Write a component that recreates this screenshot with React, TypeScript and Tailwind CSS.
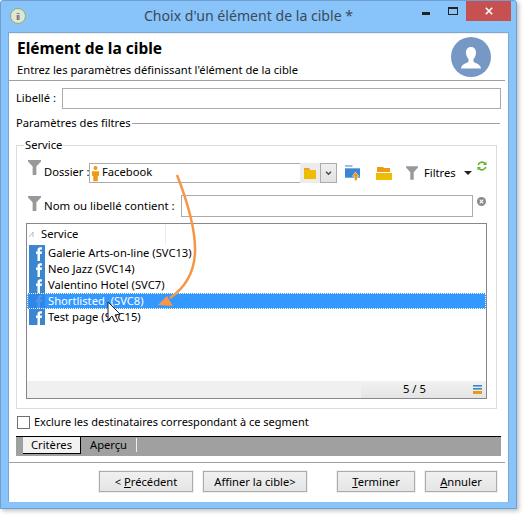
import React from "react";

const Funnel = ({ className = "" }: { className?: string }) => (
  <svg viewBox="0 0 14 16" className={className}>
    <path d="M0 0H14V1.5L9 7V16H5V7L0 1.5Z" fill="#999999" />
  </svg>
);

const Fb = ({ dim = false }: { dim?: boolean }) => (
  <svg viewBox="0 0 16 16" className="w-4 h-4 shrink-0">
    <rect width="16" height="16" fill={dim ? "#2f86e6" : "#3b86d0"} />
    <path d="M8.5 16V9H7V6.6H8.5V5C8.5 3.2 9.6 2.2 11.2 2.2H13V4.6H12C11.2 4.6 11 5 11 5.6V6.6H13L12.7 9H11V16Z" fill={dim ? "#4b98ea" : "#ffffff"} />
  </svg>
);

const rows = [
  ["Galerie Arts-on-line (SVC13)", false],
  ["Neo Jazz (SVC14)", false],
  ["Valentino Hotel (SVC7)", false],
  ["Shortlisted  (SVC8)", true],
  ["Test page (SVC15)", false],
] as const;

const Btn = ({ children, w }: { children: React.ReactNode; w: string }) => (
  <button className={`${w} h-[21px] border border-[#acacac] outline outline-1 outline-[#efefef] bg-gradient-to-b from-[#f0f0f0] to-[#e5e5e5] text-[11.2px] text-black leading-none`}>
    {children}
  </button>
);

export default function App() {
  return (
    <div className="relative w-[527px] h-[518px] bg-white overflow-hidden text-[11.2px] text-black" style={{ fontFamily: '"Noto Sans", sans-serif' }}>
      <div className="w-[517px] h-[509px] bg-[#88c4f9] border border-[#6f9fd0] rounded-t-[3px] flex flex-col shadow-[2px_2px_4px_rgba(0,0,0,0.25)]">
        {/* Title bar */}
        <div className="relative h-[31px] shrink-0 flex items-center justify-center">
          <div className="absolute left-[9px] top-[7px] w-[16px] h-[16px] rounded-full bg-[#dfe5d8] border border-[#8fb35a] flex items-center justify-center text-[9px] leading-none text-[#444]">ⅱ</div>
          <span className="text-[14.1px] text-[#3b4a57] pr-[20px] pb-[1px]">Choix d'un élément de la cible *</span>
          <div className="absolute right-[5px] top-0 flex items-start">
            <svg viewBox="0 0 8 3" className="w-[8px] h-[3px] mt-[11px]"><rect width="8" height="3" fill="#222" /></svg>
            <div className="w-[10px] h-[8px] mt-[6px] ml-[18px] border border-[#222] border-t-2" />
            <div className="w-[45px] h-[20px] ml-[8px] bg-[#c75050] flex items-center justify-center">
              <svg viewBox="0 0 10 10" className="w-[8px] h-[8px]"><path d="M1 1L9 9M9 1L1 9" stroke="#fff" strokeWidth="2" /></svg>
            </div>
          </div>
        </div>

        {/* Client */}
        <div className="ml-[7px] w-[501px] h-[470px] bg-white border-l border-r border-t border-[#7fa8d0] flex flex-col">
          <div className="h-[1px] bg-[#f0f0f0]" />
          {/* Header */}
          <div className="relative h-[47px] mr-[3px] border-b border-[#a0a0a0] pl-[8px] pt-[4px]">
            <div className="font-bold text-[15.5px] leading-[20px]">Elément de la cible</div>
            <div className="leading-[17px] mt-[3px]">Entrez les paramètres définissant l'élément de la cible</div>
            <svg viewBox="0 0 40 40" className="absolute left-[442px] top-[3px] w-[40px] h-[40px]">
              <clipPath id="c"><circle cx="20" cy="20" r="20" /></clipPath>
              <circle cx="20" cy="20" r="20" fill="#7698c4" />
              <path clipPath="url(#c)" d="M20 10C16.5 10 15 12.5 15 15.5C15 18.5 16.5 21 17.5 22V24.5C17.5 25.5 10 27 10 31.5H30C30 27 22.5 25.5 22.5 24.5V22C23.5 21 25 18.5 25 15.5C25 12.5 23.5 10 20 10Z" fill="#ffffff" />
            </svg>
          </div>

          {/* Libellé */}
          <div className="flex items-center h-[21px] mt-[7px] pl-[7px]">
            <span className="w-[46px]">Libellé :</span>
            <div className="w-[439px] h-[21px] border border-[#ababab] bg-white" />
          </div>

          {/* Paramètres */}
          <div className="flex items-center gap-[1px] mt-[6px] pl-[7px] mr-[8px] h-[17px]">
            <span>Paramètres des filtres</span>
            <div className="flex-1 h-px bg-[#a0a0a0]" />
          </div>

          {/* Group */}
          <fieldset className="mt-[5px] ml-[7px] w-[481px] h-[272px] border border-[#dcdcdc] px-[9px] pb-[9px] block">
            <legend className="ml-[-2px] px-[1px] leading-[16px]">Service</legend>

            <div className="flex items-center h-[20px] mt-[10px] relative">
              <Funnel className="w-[13px] h-[15px] mt-[-11px] ml-[2px] shrink-0" />
              <span className="ml-[3px] w-[45px] shrink-0 whitespace-nowrap pb-[1px]">Dossier :</span>
              <div className="w-[211px] h-[20px] shrink-0 border border-[#ababab] border-r-0 flex items-center relative">
                <svg viewBox="0 0 10 17" className="w-[9px] h-[17px] ml-[1px]">
                  <circle cx="5" cy="2.5" r="2.2" fill="#f09a13" />
                  <path d="M1 6H9V11H7.5V17H2.5V11H1Z" fill="#f09a13" />
                </svg>
                <span className="ml-[2px] pb-[1px]">Facebook</span>
              </div>
              <div className="w-[20px] h-[20px] shrink-0 bg-[#ececec] flex items-center justify-center">
                <svg viewBox="0 0 12 11" className="w-[12px] h-[11px]">
                  <path d="M0 0H5L6 2H12V11H0Z" fill="#eebc00" />
                  <path d="M0 0H5L6 2H0Z" fill="#f0a030" />
                </svg>
              </div>
              <div className="w-[17px] h-[20px] shrink-0 border border-[#ababab] bg-gradient-to-b from-[#efefef] to-[#e2e2e2] flex items-center justify-center">
                <svg viewBox="0 0 8 6" className="w-[7px] h-[5px]"><path d="M1 1L4 4L7 1" fill="none" stroke="#444" strokeWidth="1.6" /></svg>
              </div>
              <svg viewBox="0 0 16 16" className="w-[15px] h-[16px] ml-[8px] shrink-0">
                <path d="M0 0H8V1H0Z" fill="#2a78c8" />
                <path d="M0 3H16V13H0Z" fill="#3b86d0" />
                <path d="M11 7L15 11.5H13V16H10V11.5H8Z" fill="#f0901a" stroke="#fff" strokeWidth=".5" />
              </svg>
              <svg viewBox="0 0 16 14" className="w-[16px] h-[14px] ml-[16px] shrink-0">
                <path d="M1 1H7L8 2H14V6H1Z" fill="#f09a13" />
                <path d="M0 7H16V14H0Z" fill="#eebc00" />
              </svg>
              <Funnel className="w-[12px] h-[14px] ml-[14px] shrink-0" />
              <span className="ml-[6px] w-[31px] shrink-0 whitespace-nowrap">Filtres</span>
              <svg viewBox="0 0 8 4" className="w-[8px] h-[4px] ml-[9px] shrink-0"><path d="M0 0H8L4 4Z" fill="#222" /></svg>
              <svg viewBox="0 0 10 10" className="absolute left-[451px] top-[-2px] w-[10px] h-[10px]">
                <path d="M1.2 4A4 4 0 0 1 8 2.5M8.8 6A4 4 0 0 1 2 7.5" fill="none" stroke="#62b030" strokeWidth="1.6" />
                <path d="M9.5 0.5V4H6ZM0.5 9.5V6H4Z" fill="#62b030" />
              </svg>
            </div>

            <div className="flex items-center h-[22px] mt-[12px] relative">
              <Funnel className="w-[13px] h-[15px] mt-[-5px] ml-[2px] shrink-0" />
              <span className="ml-[3px] w-[137px] shrink-0 whitespace-nowrap text-[11.4px]">Nom ou libellé contient :</span>
              <div className="w-[292px] h-[22px] shrink-0 border border-[#ababab]" />
              <svg viewBox="0 0 10 10" className="absolute left-[451px] top-[2px] w-[9px] h-[9px]">
                <circle cx="5" cy="5" r="5" fill="#8a8a8a" />
                <path d="M3 3L7 7M7 3L3 7" stroke="#fff" strokeWidth="1.2" />
              </svg>
            </div>

            {/* List */}
            <div className="mt-[6px] w-[461px] h-[176px] border border-[#828790] bg-white flex flex-col">
              <div className="h-[21px] flex items-center shrink-0 relative">
                <svg viewBox="0 0 5 5" className="w-[5px] h-[5px] ml-[2px]"><path d="M0 5L4 0V5" fill="none" stroke="#aaa" strokeWidth=".8" /></svg>
                <span className="ml-[7px]">Service</span>
                <div className="absolute left-[138px] top-0 w-px h-[21px] bg-[#e3eef9]" />
              </div>
              <div className="flex-1 min-h-0">
                {rows.map(([t, sel]) => (
                  <div key={t} className={`h-[16px] flex items-center whitespace-pre ${sel ? "bg-[#3399ff] text-white outline outline-1 outline-dotted outline-white outline-offset-[-1px]" : ""}`}>
                    <div className="ml-[2px]"><Fb dim={sel} /></div>
                    <span className="ml-[3px]">{t}</span>
                  </div>
                ))}
              </div>
              <div className="h-[17px] bg-[#f0f0f0] flex items-center shrink-0">
                <div className="ml-auto w-[125px] h-[17px] bg-gradient-to-b from-[#f2f2f2] to-[#e4e4e4] flex items-center">
                  <span className="ml-[42px] w-[23px] whitespace-nowrap">5 / 5</span>
                  <svg viewBox="0 0 9 9" className="ml-[47px] w-[9px] h-[9px]">
                    <rect y="0" width="9" height="1.6" fill="#3b86d0" />
                    <rect y="3" width="9" height="1.6" fill="#3b86d0" />
                    <rect y="6" width="9" height="3" fill="#eb9a14" />
                  </svg>
                </div>
              </div>
            </div>
          </fieldset>

          {/* Checkbox */}
          <div className="flex items-center h-[14px] mt-[6px] ml-[8px]">
            <div className="w-[13px] h-[13px] border border-[#707070] bg-white" />
            <span className="ml-[4px] text-[11px]">Exclure les destinataires correspondant à ce segment</span>
          </div>

          {/* Tabs */}
          <div className="mt-[7px] ml-[7px] w-[485px] h-[20px] bg-[#a0a0a0] border-t border-black flex items-start pl-[7px]">
            <div className="w-[58px] h-[17px] bg-[#f2f2f2] border-b border-r border-black flex items-center justify-center">Critères</div>
            <div className="w-[56px] h-[14px] mt-[1px] border-r border-[#eeeeee] flex items-center justify-center">Aperçu</div>
          </div>

          {/* Footer */}
          <div className="mt-[6px] mr-[3px] border-t border-[#a0a0a0] flex justify-end items-center h-[38px] pr-[8px]">
            <Btn w="w-[94px] mr-[10px]">&lt; <u>P</u>récédent</Btn>
            <Btn w="w-[104px] mr-[30px]">Affiner la cible&gt;</Btn>
            <Btn w="w-[78px] mr-[10px]"><u>T</u>erminer</Btn>
            <Btn w="w-[72px]"><u>A</u>nnuler</Btn>
          </div>
        </div>
      </div>

      {/* Annotation arrow and cursor, drawn over the dialog */}
      <svg viewBox="0 0 527 518" className="absolute left-0 top-0 w-[527px] h-[518px] pointer-events-none">
        <path d="M177 175C186 198 196 228 195 253C194 272 186 287 170 298" fill="none" stroke="#f79646" strokeWidth="2.5" />
        <path d="M158 305L173 306L167 296Z" fill="#f79646" />
        <path d="M108 302V320L112 316L115 322L118 321L115 315L120 314Z" fill="#fff" stroke="#222" strokeWidth="1" />
      </svg>
    </div>
  );
}
